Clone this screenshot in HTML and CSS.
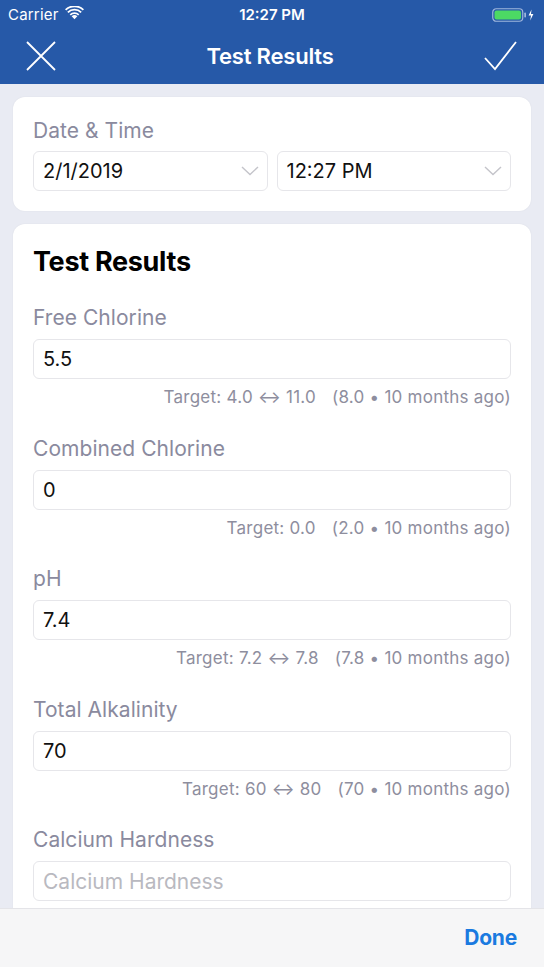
FILE: index.html
```html
<!DOCTYPE html>
<html>
<head>
<meta charset="utf-8">
<link rel="stylesheet" href="styles.css">
</head>
<body>
<div class="app">
  <header class="top">
    <div class="status">
      <div class="status-left">
        <span>Carrier</span>
        <svg class="wifi" width="19" height="14" viewBox="0 0 18 13">
          <path d="M9 12.5 L6.3 9.6 A3.9 3.9 0 0 1 11.7 9.6 Z" fill="#fff"/>
          <path d="M4.4 7.6 A6.6 6.6 0 0 1 13.6 7.6 L12.4 8.9 A4.9 4.9 0 0 0 5.6 8.9 Z" fill="#fff"/>
          <path d="M2.1 5.2 A9.9 9.9 0 0 1 15.9 5.2 L14.7 6.5 A8.2 8.2 0 0 0 3.3 6.5 Z" fill="#fff"/>
          <path d="M0 2.9 A13 13 0 0 1 18 2.9 L16.8 4.2 A11.3 11.3 0 0 0 1.2 4.2 Z" fill="#fff"/>
        </svg>
      </div>
      <div class="status-time">12:27 PM</div>
      <div class="status-right">
        <svg width="44" height="14" viewBox="0 0 44 14">
          <rect x="0.75" y="0.75" width="30" height="12.5" rx="3.5" fill="none" stroke="#9fb6dc" stroke-width="1.2"/>
          <rect x="2.5" y="2.5" width="26.5" height="9" rx="2" fill="#4cd964"/>
          <rect x="32.3" y="4.5" width="1.7" height="5" rx="0.8" fill="#9fb6dc"/>
          <path d="M39.5 1.5 L36.6 7.6 H39 L38.2 12.5 L41.4 6.1 H39 Z" fill="#fff"/>
        </svg>
      </div>
    </div>
    <nav class="navbar">
      <svg class="nav-icon" width="30" height="30" viewBox="0 0 30 30">
        <path d="M1 1 L29 29 M29 1 L1 29" stroke="#fff" stroke-width="1.8" fill="none"/>
      </svg>
      <div class="nav-title">Test Results</div>
      <svg class="nav-icon" width="34" height="30" viewBox="0 0 34 30">
        <path d="M1 17 L11 28 L32 1" stroke="#fff" stroke-width="1.8" fill="none"/>
      </svg>
    </nav>
  </header>

  <main class="content">
    <section class="card">
      <div class="label">Date &amp; Time</div>
      <div class="row">
        <div class="field select"><span>2/1/2019</span>
          <svg width="18" height="10" viewBox="0 0 18 10"><path d="M1 1 L9 8.5 L17 1" stroke="#c4c4ca" stroke-width="1.4" fill="none"/></svg>
        </div>
        <div class="field select"><span>12:27 PM</span>
          <svg width="18" height="10" viewBox="0 0 18 10"><path d="M1 1 L9 8.5 L17 1" stroke="#c4c4ca" stroke-width="1.4" fill="none"/></svg>
        </div>
      </div>
    </section>

    <section class="card results">
      <h1 class="card-title">Test Results</h1>

      <div class="block">
        <div class="label">Free Chlorine</div>
        <div class="field">5.5</div>
        <div class="hint">Target: 4.0 ↔ 11.0<span class="gap"></span>(8.0 • 10 months ago)</div>
      </div>

      <div class="block">
        <div class="label">Combined Chlorine</div>
        <div class="field">0</div>
        <div class="hint">Target: 0.0<span class="gap"></span>(2.0 • 10 months ago)</div>
      </div>

      <div class="block">
        <div class="label">pH</div>
        <div class="field">7.4</div>
        <div class="hint">Target: 7.2 ↔ 7.8<span class="gap"></span>(7.8 • 10 months ago)</div>
      </div>

      <div class="block">
        <div class="label">Total Alkalinity</div>
        <div class="field">70</div>
        <div class="hint">Target: 60 ↔ 80<span class="gap"></span>(70 • 10 months ago)</div>
      </div>

      <div class="block">
        <div class="label">Calcium Hardness</div>
        <div class="field placeholder">Calcium Hardness</div>
      </div>
    </section>
  </main>

  <footer class="toolbar">
    <span class="done">Done</span>
  </footer>
</div>
</body>
</html>
```

FILE: styles.css
```css
* { box-sizing: border-box; }
html, body { margin: 0; padding: 0; }
body {
  font-family: Inter, "Noto Sans", "Liberation Sans", sans-serif;
  background: #e9ebf3;
}
.app {
  width: 544px;
  height: 967px;
  display: flex;
  flex-direction: column;
  overflow: hidden;
}
.top {
  background: #2659a8;
  color: #fff;
  flex: none;
}
.status {
  height: 28px;
  display: flex;
  align-items: center;
  justify-content: space-between;
  padding: 0 8px 0 8px;
  font-size: 15px;
  position: relative;
}
.status-left { display: flex; align-items: center; gap: 6px; letter-spacing: 0.2px; }
.wifi { margin-top: -2px; }
.status-time {
  position: absolute;
  left: 0; right: 0;
  text-align: center;
  font-weight: 600;
  pointer-events: none;
}
.status-right { display: flex; align-items: center; padding-top: 1px; }
.navbar {
  height: 56px;
  display: flex;
  align-items: center;
  justify-content: space-between;
  padding: 0 26px 0 26px;
}
.nav-icon { display: block; }
.nav-title {
  font-size: 22px;
  font-weight: 600;
  letter-spacing: -0.2px;
}
.content {
  flex: 1;
  overflow: hidden;
  padding: 13px 13px 0 13px;
  display: flex;
  flex-direction: column;
  gap: 13px;
}
.card {
  background: #fff;
  border-radius: 12px;
  padding: 21px 20px 20px 20px;
  box-shadow: 0 0 2px rgba(0,0,0,0.06);
  flex: none;
}
.label {
  font-size: 21px;
  line-height: 26px;
  color: #8a8a9e;
  letter-spacing: 0.05px;
}
.row {
  display: grid;
  grid-template-columns: 1fr 1fr;
  gap: 9px;
  margin-top: 7px;
}
.field {
  height: 40px;
  border: 1px solid #e6e6ea;
  border-radius: 6px;
  display: flex;
  align-items: center;
  padding: 0 9px;
  font-size: 20px;
  color: #111;
  letter-spacing: 0;
}
.select { justify-content: space-between; padding-right: 8px; }
.placeholder { color: #b9b9c0; font-size: 21px; }
.results { padding-top: 22px; }
.card-title {
  margin: 0;
  font-size: 27px;
  line-height: 32px;
  font-weight: 700;
  color: #000;
  letter-spacing: -0.3px;
}
.block { margin-top: 27px; }
.block + .block { margin-top: 28.5px; }
.block .field { margin-top: 8px; }
.hint {
  margin-top: 8px;
  text-align: right;
  font-size: 17px;
  line-height: 20px;
  color: #8e8e9e;
  letter-spacing: 0.25px;
}
.gap { display: inline-block; width: 16px; }
.toolbar {
  flex: none;
  height: 59px;
  background: #f6f6f7;
  border-top: 1px solid #e4e4e8;
  display: flex;
  align-items: center;
  justify-content: flex-end;
  padding: 0 27px 2px 0;
}
.done {
  color: #1a7ae0;
  font-size: 21px;
  font-weight: 700;
  letter-spacing: -0.2px;
}
```
